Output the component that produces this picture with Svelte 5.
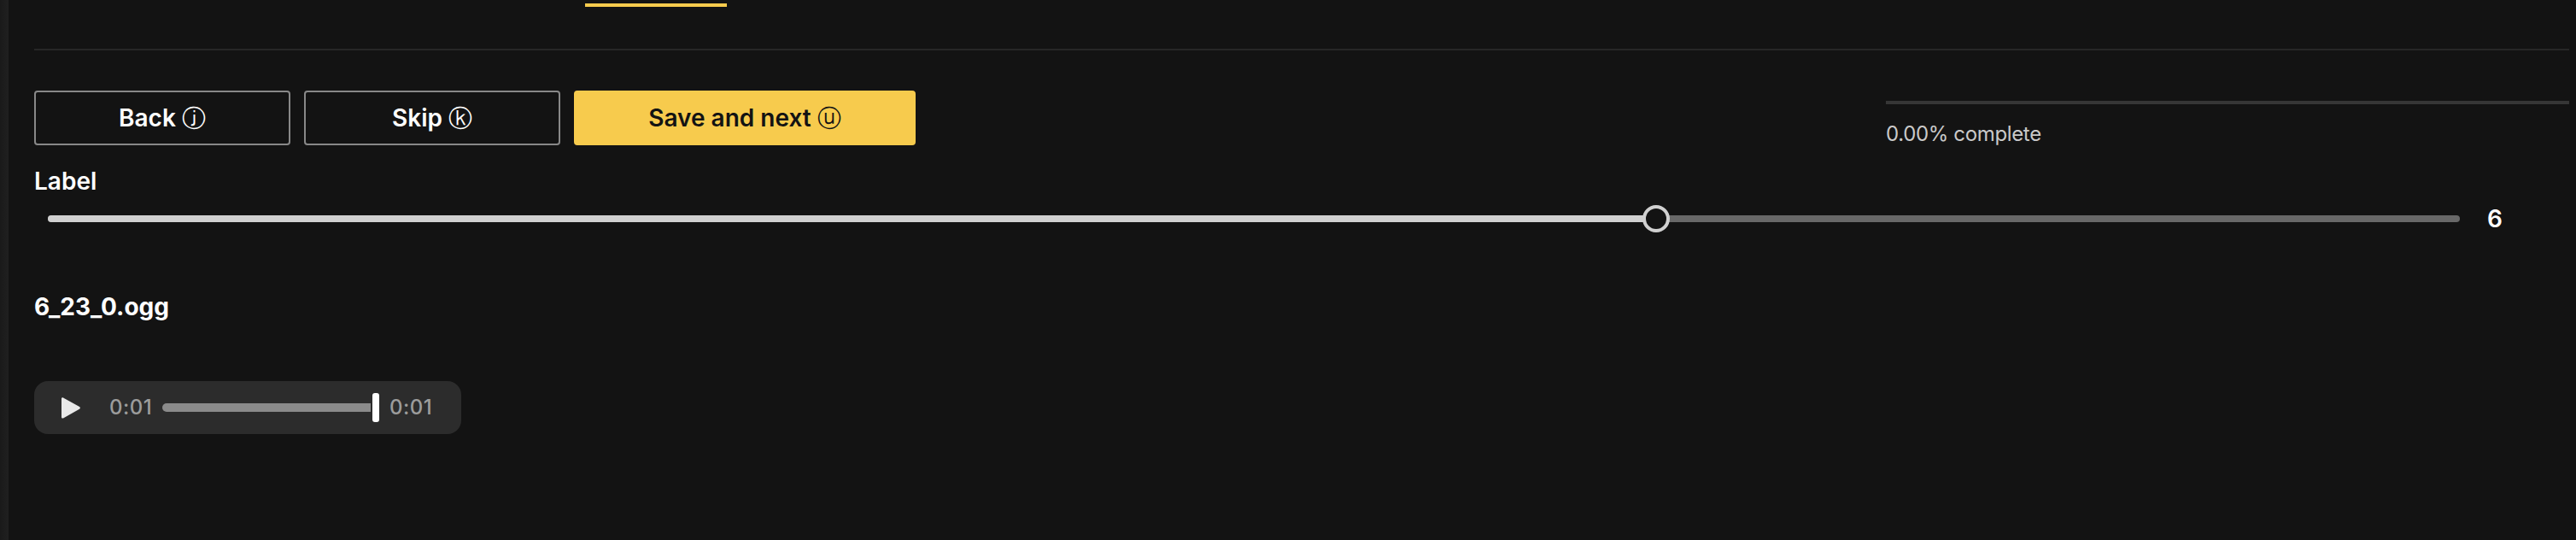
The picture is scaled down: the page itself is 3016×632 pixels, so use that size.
<script>
  const value = 6;
  const filled = 66.667;
  const actions = [
    { label: 'Back', key: 'ⓙ', kind: 'outline' },
    { label: 'Skip', key: 'ⓚ', kind: 'outline' },
    { label: 'Save and next', key: 'ⓤ', kind: 'primary' }
  ];
</script>

<div class="app">
  <aside></aside>
  <main>
    <nav><span class="tab"></span></nav>
    <div class="toolbar">
      <div class="actions">
        {#each actions as action}
          <button class={action.kind}>{action.label} <span class="key">{action.key}</span></button>
        {/each}
      </div>
      <div class="progress">
        <div class="bar"></div>
        <p>0.00% complete</p>
      </div>
    </div>
    <div class="label">Label</div>
    <div class="slider">
      <div class="track">
        <div class="fill" style="width: {filled}%"></div>
        <div class="thumb" style="left: {filled}%"></div>
      </div>
      <output>{value}</output>
    </div>
    <h2>6_23_0.ogg</h2>
    <div class="player">
      <svg class="play" width="22" height="25" viewBox="0 0 22 25">
        <path d="M2 .4 21 11a1.6 1.6 0 0 1 0 2.8L2 24.4C1 24.9 0 24.3 0 23.2V1.6C0 .5 1-.1 2 .4Z" fill="#e9e9e9" />
      </svg>
      <span class="time start">0:01</span>
      <span class="seek"></span>
      <span class="knob"></span>
      <span class="time end">0:01</span>
    </div>
  </main>
</div>

<style>
  :global(body) {
    background: #131313;
  }
  .app {
    display: flex;
    width: 3016px;
    height: 632px;
    overflow: hidden;
    background: #131313;
    color: #fff;
    font-family: Inter, sans-serif;
    font-size: 28px;
    font-weight: 600;
    line-height: 36px;
  }
  aside {
    width: 10px;
    background: linear-gradient(90deg, #1a1a1a, #202020);
  }
  main {
    flex: 1;
    box-sizing: border-box;
    padding: 0 8px 0 30px;
  }
  nav {
    box-sizing: border-box;
    height: 59px;
    padding: 4px 0 0 645px;
    border-bottom: 2px solid #272727;
  }
  .tab {
    display: block;
    width: 166px;
    height: 4px;
    background: #f7cb4d;
  }
  .toolbar {
    display: flex;
    justify-content: space-between;
    height: 64px;
    padding-top: 47px;
  }
  .actions {
    display: flex;
    gap: 16px;
  }
  button {
    box-sizing: border-box;
    width: 300px;
    height: 64px;
    padding: 0;
    border: 2px solid #888;
    border-radius: 4px;
    background: transparent;
    color: #fff;
    font: inherit;
  }
  .key {
    font-weight: 500;
  }
  .primary {
    width: 400px;
    border-color: #f7cb4d;
    background: #f7cb4d;
    color: #131313;
  }
  .progress {
    width: 800px;
    padding-top: 12px;
  }
  .bar {
    height: 4px;
    background: #363636;
  }
  p {
    margin: 17px 0 0;
    color: #c9c9c9;
    font-size: 24px;
    font-weight: 400;
    letter-spacing: -0.35px;
    line-height: 36px;
  }
  .label {
    margin-top: 24px;
  }
  .slider {
    display: flex;
    align-items: center;
    height: 36px;
    margin-top: 8px;
    padding-left: 16px;
  }
  .track {
    position: relative;
    width: 2824px;
    height: 8px;
    border-radius: 4px;
    background: #686868;
  }
  .fill {
    height: 8px;
    border-radius: 4px;
    background: #d0d0d0;
  }
  .thumb {
    position: absolute;
    top: -12px;
    box-sizing: border-box;
    width: 32px;
    height: 32px;
    margin-left: -16px;
    border: 4px solid #d0d0d0;
    border-radius: 50%;
    background: #131313;
  }
  output {
    margin-left: 32px;
  }
  h2 {
    margin: 67px 0 0;
    font-size: 28px;
    font-weight: 700;
    line-height: 36px;
  }
  .player {
    display: flex;
    align-items: center;
    box-sizing: border-box;
    width: 500px;
    height: 62px;
    margin-top: 69px;
    padding-left: 32px;
    border-radius: 16px;
    background: #2c2c2c;
  }
  .time {
    color: #9c9c9c;
    font-size: 24px;
    font-weight: 500;
    letter-spacing: 0.5px;
  }
  .start {
    width: 62px;
    margin-left: 34px;
  }
  .seek {
    width: 244px;
    height: 10px;
    border-radius: 5px 0 0 5px;
    background: #8b8b8b;
  }
  .knob {
    width: 8px;
    height: 34px;
    margin-left: 2px;
    border-radius: 3px;
    background: #fff;
  }
  .end {
    margin-left: 12px;
  }
</style>
